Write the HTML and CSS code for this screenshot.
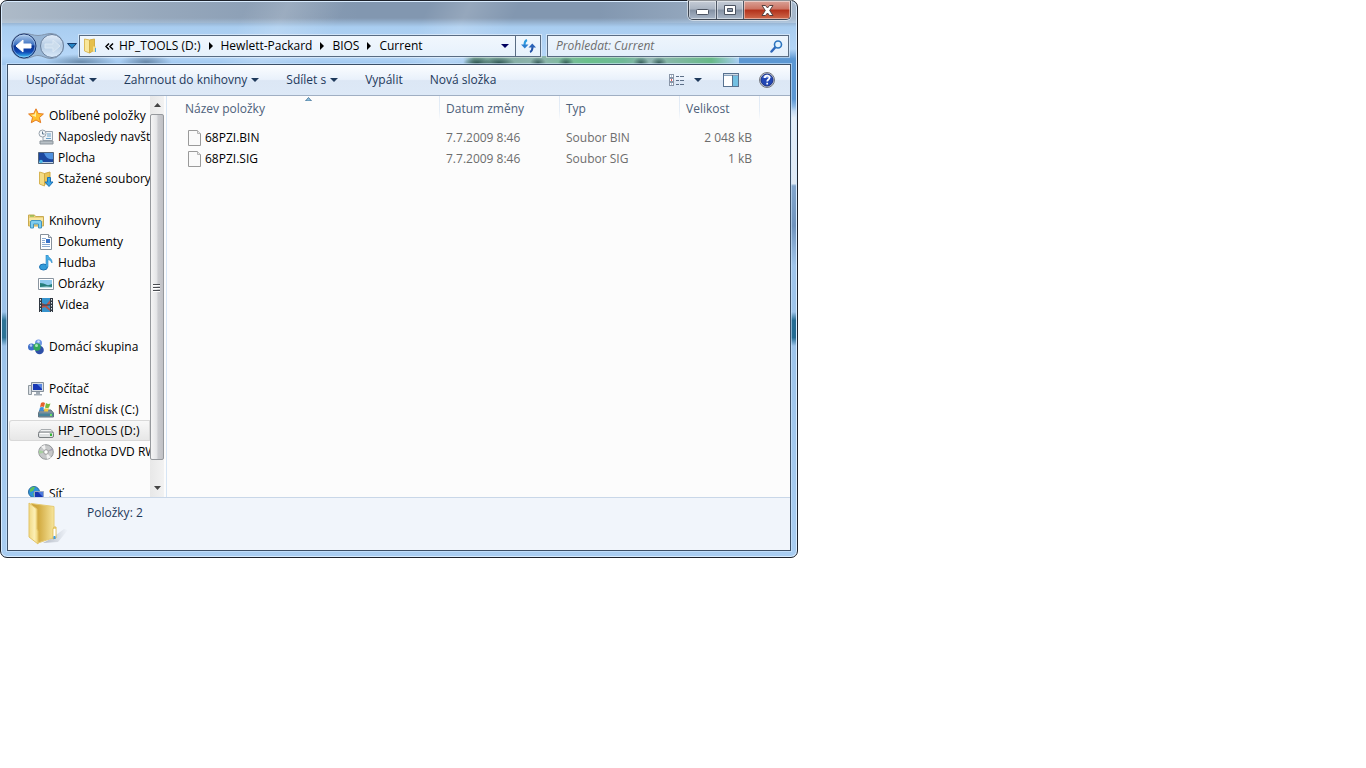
FILE: index.html
```html
<!DOCTYPE html>
<html lang="cs">
<head>
<meta charset="utf-8">
<meta name="viewport" content="width=device-width, initial-scale=1">
<title>Current</title>
<link rel="stylesheet" href="styles.css">
</head>
<body>
<div class="window">
  <header class="frame-top">
    <div class="caption">
      <button class="cap-btn cap-min" aria-label="Minimalizovat"><svg width="13" height="6" viewBox="0 0 13 6"><rect x=".5" y=".5" width="12" height="5" rx="1" fill="#fff" stroke="#4b5361"/></svg></button>
      <button class="cap-btn cap-max" aria-label="Maximalizovat"><svg width="12" height="10" viewBox="0 0 12 10"><path fill="#fff" stroke="#4b5361" fill-rule="evenodd" d="M.5.5h11v9H.5zM3.500 3.500v3h5v-3z"/></svg></button>
      <button class="cap-btn cap-close" aria-label="Zavřít"><svg width="13" height="11" viewBox="0 0 13 11"><path fill="#fff" stroke="#54403f" d="M1 .5h3.500l2 2.500 2-2.500H12L8.700 5.500 12 10.500H8.500l-2-2.500-2 2.500H1l3.300-5z"/></svg></button>
    </div>
    <div class="navbar">
      <div class="history">
        <svg class="history-art" width="56" height="28" viewBox="0 0 56 28" aria-hidden="true">
          <defs>
            <linearGradient id="gb" x1="0" y1="0" x2="0" y2="1"><stop offset="0" stop-color="#b4d0ee"/><stop offset=".45" stop-color="#3a6fc0"/><stop offset=".5" stop-color="#0b3593"/><stop offset=".75" stop-color="#0f48b4"/><stop offset="1" stop-color="#43d0ff"/></linearGradient>
            <linearGradient id="gf" x1="0" y1="0" x2="0" y2="1"><stop offset="0" stop-color="#e4eefa"/><stop offset=".5" stop-color="#b4cbe3"/><stop offset="1" stop-color="#dcebfb"/></linearGradient>
          </defs>
          <path d="M15 1.500c6 0 9 2 14 2s8-2 13-2a12.500 12.500 0 0 1 0 25c-6 0-8-3-13-3s-7 3-14 3a12.500 12.500 0 0 1 0-25z" fill="#8ba6c4" fill-opacity=".65" stroke="#8195ad"/>
          <circle cx="15" cy="14" r="12" fill="url(#gb)" stroke="#1e3870"/>
          <circle cx="15" cy="14" r="11" fill="none" stroke="#c5ddf5" stroke-opacity=".5"/>
          <path d="M7 14l7-6v4h8v4h-8v4z" fill="#fff" stroke="#fff" stroke-linejoin="round"/>
          <circle cx="43" cy="14" r="11.500" fill="url(#gf)" stroke="#697f9c"/>
          <path d="M51 14l-7-6v4h-8v4h8v4z" fill="#ccdded" stroke="#dbe8f4" stroke-linejoin="round"/>
        </svg>
        <button class="round" aria-label="Zpět"></button>
        <button class="round" aria-label="Vpřed"></button>
      </div>
      <button class="recent" aria-label="Poslední stránky"><svg width="10" height="7" viewBox="0 0 10 7"><path d="M.5.500h9L5 5.500z" fill="#2585c5" stroke="#173c6c"/></svg></button>
      <div class="address">
        <svg class="address-icon" width="16" height="16" viewBox="0 0 16 16" aria-hidden="true"><path d="M1.500 1l5 1v13l-5-2z" fill="#f9e79b" stroke="#dcba5a"/><path d="M6.500 2l5-1v11l-5 3z" fill="#e6c04c" stroke="#d2ae49"/><path d="M10 8.500h3V14h-3z" fill="#f5df90"/><path d="M12.500 10v4" stroke="#4da6e8"/></svg>
        <button class="overflow" aria-label="Nadřazené složky"><svg width="9" height="7" viewBox="0 0 9 7"><path d="M4 .5l-3 3 3 3M8 .5l-3 3 3 3" fill="none" stroke="#000" stroke-width="1.500"/></svg></button>
        <nav class="crumbs" aria-label="Cesta">
          <a href="#">HP_TOOLS (D:)</a><i class="chev"></i>
          <a href="#">Hewlett-Packard</a><i class="chev"></i>
          <a href="#">BIOS</a><i class="chev"></i>
          <a href="#">Current</a>
        </nav>
        <button class="history-drop" aria-label="Předchozí umístění"><i class="caret caret-navy"></i></button>
        <button class="refresh" aria-label="Obnovit"><svg width="15" height="14" viewBox="0 0 15 14"><path d="M6 1C3.500 2 3.500 3.500 3.500 6" fill="none" stroke="#2b9be0" stroke-width="2"/><path d="M0 5.500h7.500L3.800 9.500z" fill="#2b7fd0"/><path d="M9 13c2.500-1 2.500-2.500 2.500-5" fill="none" stroke="#2452a6" stroke-width="2"/><path d="M7.500 8.500H15l-3.700-4z" fill="#2b63b8"/></svg></button>
      </div>
      <form class="search">
        <input type="search" aria-label="Prohledat: Current" placeholder="Prohledat: Current">
        <svg width="13" height="13" viewBox="0 0 13 13" aria-hidden="true"><path d="M1.500 11.500L5.500 7" stroke="#2f67ba" stroke-width="2.500" stroke-linecap="round"/><circle cx="8" cy="4.500" r="3.500" fill="#e3f3ff" stroke="#2c74be" stroke-width="1.600"/></svg>
      </form>
    </div>
  </header>

  <div class="client">
    <div class="toolbar">
      <button>Uspořádat<i class="caret"></i></button>
      <button>Zahrnout do knihovny<i class="caret"></i></button>
      <button>Sdílet s<i class="caret"></i></button>
      <button>Vypálit</button>
      <button>Nová složka</button>
      <span class="grow"></span>
      <button class="views" aria-label="Změnit zobrazení"><svg width="16" height="13" viewBox="0 0 16 13"><g fill="#fff" stroke="#8a96a8"><rect x=".5" y=".5" width="4" height="3"/><rect x=".5" y="4.500" width="4" height="3"/><rect x=".5" y="8.500" width="4" height="3"/></g><path d="M2 2h1M2 10h1" stroke="#5b84b8"/><path d="M2 6h1" stroke="#d22" stroke-width="1.500"/><path d="M7 2.500h3m1 0h4M7 6.500h3m1 0h4M7 10.500h3m1 0h4" stroke="#5d6f88"/></svg><i class="caret"></i></button>
      <button class="icon-btn" aria-label="Podokno náhledu"><svg width="16" height="14" viewBox="0 0 16 14"><rect x=".5" y=".5" width="15" height="13" fill="#fff" stroke="#587290"/><path d="M1 2.500h14" stroke="#8aa3bd"/><rect x="10" y="3" width="5" height="10" fill="#73c0e2"/><path d="M9.500 1v12" stroke="#587290"/><path d="M1 1.500h14" stroke="#cfdbe7"/></svg></button>
      <button class="icon-btn" aria-label="Nápověda"><svg width="16" height="16" viewBox="0 0 16 16"><circle cx="8" cy="8" r="7.500" fill="#c9ced8" stroke="#73777f"/><circle cx="8" cy="8" r="6" fill="#2146b5" stroke="#182f83"/><path d="M3.500 6a4.800 4.800 0 0 1 9 0z" fill="#6f8fdd"/><path d="M5.800 6c0-3 4.700-3 4.700-.3C10.500 7.500 8.200 7.500 8.200 9.500M8.200 10.800v1.700" fill="none" stroke="#fff" stroke-width="1.700"/></svg></button>
    </div>

    <div class="panes">
      <nav class="tree" aria-label="Navigační podokno">
        <ul>
          <li><a class="root" href="#"><svg width="16" height="16" viewBox="0 0 16 16"><path d="M8 .8l2.200 4.700 5.200.5-3.900 3.500 1.200 5.200L8 12l-4.700 2.700 1.200-5.200L.6 6l5.200-.5z" fill="#ffc02e" stroke="#e57a22"/><path d="M8 3v6L3 7l3.500-.5z" fill="#fff0a6"/></svg>Oblíbené položky</a></li>
          <li><a href="#"><svg width="16" height="16" viewBox="0 0 16 16"><path d="M5 2.500h9.500v9H5z" fill="#eef2f6" stroke="#9aa4ae"/><path d="M9 5h4M9 7h4M8 9.500h5" stroke="#6ca2c8"/><path d="M2 12h13v3H2z" fill="#b8c0c6" stroke="#8c959c"/><circle cx="4.500" cy="4.500" r="3.500" fill="#f4f7fa" stroke="#9aa4ae"/><path d="M4.500 2.500v2.500h2" fill="none" stroke="#60788e"/></svg>Naposledy navštívené</a></li>
          <li><a href="#"><svg width="16" height="16" viewBox="0 0 16 16"><path d="M.5 2.500h15v11H.5z" fill="#1b479f" stroke="#53657b"/><path d="M6 3h9v6c-4 1-7-1-9-6z" fill="#4f91df"/><path d="M1 12h14v1H1z" fill="#bed1e4"/><circle cx="3" cy="11.500" r="1.800" fill="#4bb8e6"/></svg>Plocha</a></li>
          <li><a href="#"><svg width="16" height="16" viewBox="0 0 16 16"><path d="M1.500 1l5 1.500V15l-5-2z" fill="#f5dc84" stroke="#d7b453"/><path d="M6.500 2.500L12 1v12H6.500z" fill="#e9c65a" stroke="#d0a944"/><path d="M9.500 6.500h3V11H15l-4 4.500L7 11h2.500z" fill="#39a4e5" stroke="#1d70b4"/></svg>Stažené soubory</a></li>
          <li class="gap"><a class="root" href="#"><svg width="16" height="16" viewBox="0 0 16 16"><path d="M.5 2h6l1 1.500h8V13H.5z" fill="#edd27b" stroke="#c8aa51"/><path d="M2 3h4" stroke="#68b64b"/><path d="M1 5h14v3H1z" fill="#f8e6a1"/><path d="M2.500 15V9q0-1.500 1.500-1.500h8q1.500 0 1.500 1.500v6h-3v-4h-5v4z" fill="#80cef0" stroke="#4395bf"/></svg>Knihovny</a></li>
          <li><a href="#"><svg width="16" height="16" viewBox="0 0 16 16"><path d="M2.500.5h8l3 3v12h-11z" fill="#fff" stroke="#87919c"/><path d="M10.500.5v3h3" fill="#e1e6eb" stroke="#87919c"/><path d="M4 4.500h4M4 6.500h3M4 8.500h3M4 10.500h8M4 12.500h8" stroke="#8babd1"/><path d="M8 5h4v4H8z" fill="#3873c8"/></svg>Dokumenty</a></li>
          <li><a href="#"><svg width="16" height="16" viewBox="0 0 16 16"><ellipse cx="5.500" cy="12" rx="4" ry="3" fill="#329bd9" stroke="#1b72b3"/><path d="M8 12V0h2c0 3 4.500 3 4 8-1-2-2-3-4-3.500V12z" fill="#49aee6" stroke="#2785c4" stroke-width=".6"/></svg>Hudba</a></li>
          <li><a href="#"><svg width="16" height="16" viewBox="0 0 16 16"><path d="M.5 2.500h15v11H.5z" fill="#fff" stroke="#89949f"/><path d="M2 4h12v8H2z" fill="#8fcaee"/><path d="M2 7q4 0 6 1.500T14 8v4H2z" fill="#267e7b"/><path d="M2 11q7-1 12 0v1H2z" fill="#bfe1e9"/></svg>Obrázky</a></li>
          <li><a href="#"><svg width="16" height="16" viewBox="0 0 16 16"><path d="M1 1h14v14H1z" fill="#303841"/><path d="M4 1h8v14H4z" fill="#3693cd"/><path d="M4 6l4 2 4-5v4L9 9l3 3v2L7 10l-3 1z" fill="#bb5547"/><path d="M4 8h8" stroke="#243a51"/><path d="M2.500 2v13M13.500 2v13" stroke="#dfe6ec" stroke-dasharray="1.500"/></svg>Videa</a></li>
          <li class="gap"><a class="root" href="#"><svg width="16" height="16" viewBox="0 0 16 16"><circle cx="10.500" cy="4" r="3.500" fill="#6d96e3"/><circle cx="3.500" cy="8" r="3.500" fill="#3f6fc9"/><circle cx="11.500" cy="11" r="4.300" fill="#2e50a8"/><circle cx="9" cy="8" r="3.700" fill="#33a85a"/><circle cx="8.500" cy="6.500" r="1.500" fill="#a9e5b7"/><circle cx="3" cy="6.500" r="1.300" fill="#b3cbf5"/><circle cx="10.500" cy="2.500" r="1.300" fill="#cfdef9"/></svg>Domácí skupina</a></li>
          <li class="gap"><a class="root" href="#"><svg width="16" height="16" viewBox="0 0 16 16"><path d="M.5 4.500h3v9h-3z" fill="#dbe0e5" stroke="#8f989f"/><path d="M3.500 1.500h12v9h-12z" fill="#d8dee5" stroke="#848f9a"/><path d="M5 3h9v6H5z" fill="#1838b5"/><path d="M9 3h5v5z" fill="#5886e1"/><path d="M8 11h4v2h2v1.500H6V13h2z" fill="#a1abb5"/></svg>Počítač</a></li>
          <li><a href="#"><svg width="16" height="16" viewBox="0 0 16 16"><path d="M2 8h11l2.500 3v4H.5v-4z" fill="#7c8f9c" stroke="#5f7381"/><path d="M1 11.500h14V14H1z" fill="#478399"/><path d="M3 1q2-1.500 4 0L6 5Q4 4 2 5z" fill="#e6602b"/><path d="M8 1q2 1.500 4.500.5L11 5.500q-2 1-4 0z" fill="#79b93c"/><path d="M2 5.500q2-1 4 0L5 9Q3 8 1 9z" fill="#3c8fdc"/><path d="M6.800 6q2 1 4 0L10 9.500H6z" fill="#f8c83a"/><path d="M12 12h2v2h-2z" fill="#6be06a"/></svg>Místní disk (C:)</a></li>
          <li><a class="selected" href="#" aria-current="page"><svg width="16" height="16" viewBox="0 0 16 16"><path d="M3 6.500h10l2.500 3H.5z" fill="#f0f2f3" stroke="#a7abae"/><rect x=".5" y="9" width="15" height="5.500" rx="1.500" fill="#dfe2e3" stroke="#787d80"/><path d="M2 10.500h9" stroke="#fff"/><path d="M12 10.500h2v2.500h-2z" fill="#35b534"/></svg>HP_TOOLS (D:)</a></li>
          <li><a href="#"><svg width="16" height="16" viewBox="0 0 16 16"><circle cx="8" cy="8" r="7.300" fill="#c6c8c9" stroke="#939698"/><path d="M8 8L3 2.500 7 1zM8 8l5 5.500L9 15z" fill="#f2f2f2"/><path d="M8 8L1 6v4z" fill="#a6cda0"/><path d="M8 8l7-2v-2z" fill="#a39fb0"/><circle cx="8" cy="8" r="2.300" fill="#fff" stroke="#999"/></svg>Jednotka DVD RW</a></li>
          <li class="gap"><a class="root" href="#"><svg width="16" height="16" viewBox="0 0 16 16"><circle cx="6" cy="6" r="5.500" fill="#2e93da" stroke="#2b6c9e"/><path d="M2 3q3-3 5-2L5 5 2 6zM5 7l3 1-2 3z" fill="#5dc15a"/><path d="M6.500 5.500h9v7h-9z" fill="#1636b0" stroke="#9ca9c2"/><path d="M10 6h5v5z" fill="#4d79dc"/><path d="M9 14h4" stroke="#8e99a6"/></svg>Síť</a></li>
        </ul>
      </nav>
      <div class="scrollbar" aria-hidden="true">
        <span class="sb-arrow"><svg width="7" height="4" viewBox="0 0 7 4"><path d="M0 4l3.500-4L7 4z" fill="#444"/></svg></span>
        <span class="sb-thumb"><svg width="8" height="9" viewBox="0 0 8 9"><path d="M0 1.500h7M0 4.500h7M0 7.500h7" stroke="#4a4d52"/><path d="M0 2.500h7M0 5.500h7M0 8.500h7" stroke="#fff"/></svg></span>
        <span class="sb-rest"></span>
        <span class="sb-arrow"><svg width="7" height="4" viewBox="0 0 7 4"><path d="M0 0l3.500 4L7 0z" fill="#444"/></svg></span>
      </div>
      <main class="files">
        <table>
          <colgroup><col class="c-name"><col class="c-mid"><col class="c-mid"><col class="c-size"></colgroup>
          <thead><tr><th aria-sort="ascending">Název položky<svg class="sort" width="7" height="4" viewBox="0 0 7 4"><path d="M.5 4l3-3.500 3 3.500z" fill="#8fc3e0" stroke="#3c6a91" stroke-width=".8"/></svg></th><th>Datum změny</th><th>Typ</th><th>Velikost</th></tr></thead>
          <tbody>
            <tr><td><span class="file"><svg width="14" height="16" viewBox="0 0 14 16"><path d="M.5.500h9l3 3v12H.5z" fill="#fafafa" stroke="#9a9a9a"/><path d="M9.500.5v3h3" fill="#e8e8e8" stroke="#b5b5b5"/></svg>68PZI.BIN</span></td><td>7.7.2009 8:46</td><td>Soubor BIN</td><td>2 048 kB</td></tr>
            <tr><td><span class="file"><svg width="14" height="16" viewBox="0 0 14 16"><path d="M.5.500h9l3 3v12H.5z" fill="#fafafa" stroke="#9a9a9a"/><path d="M9.500.5v3h3" fill="#e8e8e8" stroke="#b5b5b5"/></svg>68PZI.SIG</span></td><td>7.7.2009 8:46</td><td>Soubor SIG</td><td>1 kB</td></tr>
          </tbody>
        </table>
      </main>
    </div>

    <footer class="details">
      <svg width="40" height="44" viewBox="0 0 40 44" aria-hidden="true">
        <defs>
          <linearGradient id="fl" x1="0" y1="0" x2="1" y2="0"><stop offset="0" stop-color="#f0d985"/><stop offset=".6" stop-color="#fcefb4"/><stop offset="1" stop-color="#eed375"/></linearGradient>
          <linearGradient id="fr" x1="0" y1="0" x2="1" y2="0"><stop offset="0" stop-color="#c79c35"/><stop offset=".35" stop-color="#d3ac43"/><stop offset="1" stop-color="#f7e59b"/></linearGradient>
          <linearGradient id="fs" x1="0" y1="0" x2="1" y2="0"><stop offset="0" stop-color="#8c94a2"/><stop offset="1" stop-color="#8c94a2" stop-opacity="0"/></linearGradient>
        </defs>
        <path d="M24 36l12-9 4 1-10 12-15 1z" fill="url(#fs)" opacity=".6"/>
        <path d="M3 1.500l23 3v31L10 41z" fill="url(#fr)" stroke="#e6cb74"/>
        <path d="M25 27l1-2h2v11l-3 1z" fill="#f3db87" stroke="#ddbb59"/>
        <path d="M26.500 27v8" stroke="#fff" stroke-width="2"/><path d="M26.500 34v3" stroke="#3b9be8" stroke-width="2"/>
        <path d="M1 1l8 6v20l1 2v13L1 35z" fill="url(#fl)" stroke="#e3c468"/>
      </svg>
      <p>Položky: 2</p>
    </footer>
  </div>
</div>
</body>
</html>
```
FILE: styles.css
```css
* { box-sizing: border-box; }
body { margin: 0; background: #fff; font: 12px/20px "Open Sans", "Noto Sans", sans-serif; color: #000; }
button { margin: 0; padding: 0; border: 0; background: none; font: inherit; color: inherit; display: flex; align-items: center; justify-content: center; }
a { color: inherit; text-decoration: none; }
svg { display: block; flex: none; }
ul { list-style: none; margin: 0; padding: 0; }

.window {
  display: flex; flex-direction: column;
  max-width: 798px; height: 100vh; max-height: 558px;
  padding: 0 6px 6px;
  border: 1px solid #1d222b; border-radius: 7px;
  box-shadow: inset 0 0 0 1px #d9ecff;
  background:
    radial-gradient(ellipse 36px 8px at 80px 61px, #52718fb0, transparent),
    radial-gradient(ellipse 26px 8px at 145px 61px, #4d6b8ab0, transparent),
    radial-gradient(ellipse 14px 6px at 476px 62px, #264c4ae0, transparent),
    radial-gradient(ellipse 16px 6px at 498px 62px, #264c4ae0, transparent),
    radial-gradient(ellipse 8px 6px at 537px 62px, #264c4ad0, transparent),
    radial-gradient(ellipse 8px 6px at 565px 62px, #264c4ad0, transparent),
    radial-gradient(ellipse 8px 6px at 640px 62px, #264c4ad0, transparent),
    radial-gradient(ellipse 8px 6px at 658px 62px, #264c4ad0, transparent),
    linear-gradient(90deg, transparent, #7ba79b 4%, #8fb5ae 28%, #6bc08c 45%, #6fb997 58%, #93b7b4 68%, #67b988 90%, transparent) 462px 55px / 276px 9px no-repeat,
    linear-gradient(transparent, #5b97d3 10px, #5b97d3 50px, transparent) 738px 48px / 60px 62px no-repeat,
    linear-gradient(transparent, #e4eef8 15%, #dfe9f4 97%, #7da4cc) 100% 105px / 7px 80px no-repeat,
    linear-gradient(#83a6cd, #6f93bd 50%, #8fb3da 80%, transparent) 100% 185px / 7px 80px no-repeat,
    linear-gradient(transparent, #246b93 25%, #246b93 75%, transparent) 100% 311px / 7px 34px no-repeat,
    linear-gradient(transparent, #2d7396 25%, #2d7396 75%, transparent) 0 311px / 7px 34px no-repeat,
    linear-gradient(115deg, transparent 30%, #ffffff28 35%, transparent 42%, transparent 52%, #ffffff28 57%, transparent 63%) 0 0 / 100% 64px no-repeat,
    linear-gradient(90deg, #c7cfd6a0, #b7c3cf60 20%, transparent 45%, transparent 75%, #d5e3f070) 0 0 / 100% 22px no-repeat,
    linear-gradient(#8297b0 0, #8297b0 17px, #a9cdf0 26px, #b6d7f8 55px, #9ec6ee 64px) 0 0 / 100% 64px no-repeat,
    linear-gradient(#b9d7f5, #a4c7ec 30%, #9cc3ea 60%, #a9cdf1);
}

.frame-top { display: flex; flex-direction: column; gap: 14px; padding-bottom: 6px; }
.caption { display: flex; align-self: flex-end; height: 19px; border: 1px solid #3e4652; border-top: 0; border-radius: 0 0 5px 5px; overflow: hidden; box-shadow: 0 0 0 1px #ffffff80; }
.cap-btn { width: 27px; background: linear-gradient(#c5ccd6, #aab4c2 45%, #8491a3 50%, #a9b6c7); box-shadow: inset 0 0 0 1px #ffffff70; }
.cap-max { border-left: 1px solid #4d5664; border-right: 1px solid #4d5664; width: 28px; }
.cap-min { align-items: flex-end; padding-bottom: 4px; }
.cap-close { width: 46px; background: linear-gradient(#d9a297, #cc7362 45%, #b2301a 50%, #cf6a4c); }

.navbar { display: flex; align-items: center; height: 24px; gap: 6px; padding: 0 2px; }
.history { position: relative; display: flex; width: 56px; height: 28px; }
.history-art { position: absolute; inset: 0; }
.round { flex: 1; position: relative; border-radius: 14px; }
.recent { width: 11px; height: 20px; margin-left: -5px; margin-right: -4px; }
.address { flex: 1; display: flex; align-items: center; height: 22px; padding-left: 3px; border: 1px solid #596c83; background: linear-gradient(#f1f7fd, #e6f1fc); box-shadow: 0 0 0 1px #ffffff70; }
.overflow { width: 20px; height: 20px; }
.crumbs { flex: 1; display: flex; align-items: center; gap: 8px; min-width: 0; white-space: nowrap; overflow: hidden; }
.chev { border: 4px solid transparent; border-left-color: #000; border-right: 0; }
.history-drop { width: 20px; height: 20px; }
.refresh { width: 25px; height: 20px; border-left: 1px solid #596c83; }
.search { display: flex; align-items: center; width: 242px; height: 22px; padding: 0 5px 0 8px; border: 1px solid #596c83; background: linear-gradient(#eef5fc, #e3effb); box-shadow: 0 0 0 1px #ffffff70; }
.search input { flex: 1; min-width: 0; padding: 0; border: 0; outline: 0; background: none; font: italic 12px/20px "Open Sans", sans-serif; }
.search input::placeholder { color: #6d6d6d; opacity: 1; }

.caret { border: 4px solid transparent; border-top-color: #1e395b; border-bottom: 0; }
.caret-navy { border-top-color: #000060; }

.client { flex: 1; min-height: 0; display: flex; flex-direction: column; border: 1px solid #3c4f66; box-shadow: 0 0 0 1px #d5eaff90; background: #fcfcfc; }
.toolbar { display: flex; align-items: stretch; gap: 27px; height: 31px; padding: 0 15px 0 18px; color: #1e395b; background: linear-gradient(#fbfdff, #e9f1fb 48%, #dce7f5 52%, #dde9f7); border-bottom: 1px solid #a0afc3; white-space: nowrap; }
.toolbar button { gap: 4px; }
.grow { flex: 1; }
.toolbar .views { gap: 9px; margin-right: -6px; }
.toolbar .icon-btn + .icon-btn { margin-left: -7px; }

.panes { flex: 1; min-height: 0; display: flex; }
.tree { width: 142px; padding-top: 9px; overflow: hidden; white-space: nowrap; }
.tree a { display: flex; align-items: center; gap: 4px; height: 21px; padding-left: 30px; }
.tree a.root { padding-left: 20px; gap: 5px; }
.tree .gap { margin-top: 21px; }
.tree a.selected { padding-left: 29px; margin-left: 1px; background: linear-gradient(#f9f9f9, #e6e6e6); box-shadow: inset 0 0 0 1px #d9d9d9; border-radius: 3px 0 0 3px; }
.scrollbar { display: flex; flex-direction: column; width: 14px; background: linear-gradient(90deg, #e8e8e8, #f2f2f2); }
.sb-arrow { display: flex; align-items: center; justify-content: center; height: 18px; }
.sb-thumb { flex: 1; display: flex; align-items: center; justify-content: center; border: 1px solid #96999d; border-radius: 2px; background: linear-gradient(90deg, #f5f5f5, #e5e6e8 45%, #cbccd0 60%, #c0c1c5); }
.sb-rest { height: 19px; }
.files { flex: 1; min-width: 0; margin-left: 2px; border-left: 1px solid #d6e5f5; overflow: hidden; }

table { table-layout: fixed; width: 583px; margin-left: 10px; border-collapse: collapse; line-height: 20px; color: #6d6d6d; }
.c-name { width: 263px; }
.c-mid { width: 120px; }
.c-size { width: 80px; }
th { position: relative; height: 31px; padding: 3px 6px 0; text-align: left; vertical-align: top; font-weight: 400; color: #4c607a; background: linear-gradient(#dfe9f5, #e6eef7 60%, transparent) right top / 1px 24px no-repeat; }
th:first-child { padding-left: 8px; }
.sort { position: absolute; top: 1px; left: 50%; margin-left: -4px; }
td { height: 21px; padding: 0 6px; white-space: nowrap; }
td:first-child { padding-left: 11px; color: #000; }
td:last-child { text-align: right; padding-right: 8px; }
.file { display: flex; align-items: center; gap: 3px; }

.details { display: flex; align-items: flex-start; gap: 19px; height: 53px; padding: 4px 20px; background: #f1f5fb; border-top: 1px solid #c9d7e8; color: #1e395b; }
.details p { margin: 1px 0 0; }
```
